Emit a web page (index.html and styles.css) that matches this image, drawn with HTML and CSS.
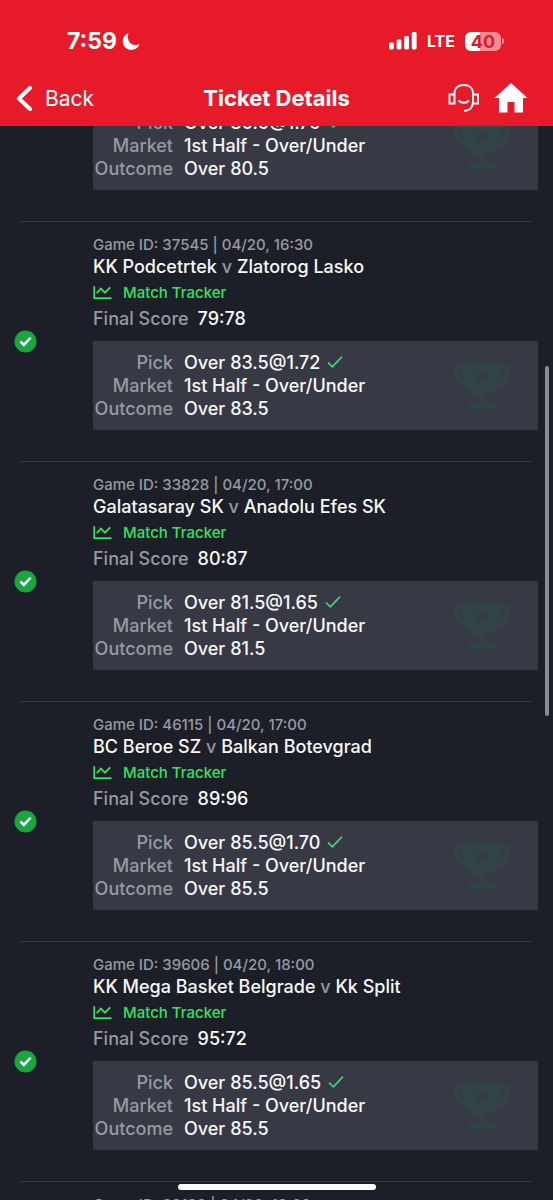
FILE: index.html
```
<!DOCTYPE html>
<html lang="en">
<head>
<meta charset="utf-8">
<meta name="viewport" content="width=device-width, initial-scale=1">
<title>Ticket Details</title>
<link rel="stylesheet" href="styles.css">
</head>
<body>
<svg class="defs" width="0" height="0" aria-hidden="true">
  <symbol id="won" viewBox="0 0 24 24"><circle cx="12" cy="12" r="11.5" fill="#18a641"/><path d="M6.800 12l3.500 3.500 7-7.400" fill="none" stroke="#fff" stroke-width="2.600"/></symbol>
  <symbol id="chart" viewBox="0 0 18 14"><path d="M1.200 1v11.400H17.500M3.500 7.500l4-4.200 3.800 3.900 5-5" fill="none" stroke="currentColor" stroke-width="1.700"/></symbol>
  <symbol id="tick" viewBox="0 0 16 16"><path d="M1 7.600l4.400 4.200L15 1.600" fill="none" stroke="currentColor" stroke-width="1.600"/></symbol>
  <symbol id="trophy" viewBox="0 0 56 50"><path fill="currentColor" fill-rule="evenodd" d="M11 1h34v3h11v6c0 9-4 14-12 17-3 4-7 7-13 8v6h5c3 0 5 2 5 4v3H14v-3c0-2 2-4 5-4h6v-6c-6-1-10-4-13-8C4 24 0 19 0 10V4h11zM5 9v2c0 4 2 7 5 9-1-3-2-7-2-11zM51 9h-3c0 4-1 8-2 11 3-2 5-5 5-9zM28 8l-2.300 5.400-5.700.5 4.400 3.800-1.400 5.600 5-3 5 3-1.400-5.600 4.400-3.800-5.700-.5z"/></symbol>
</svg>

<header class="top">
  <div class="status">
    <div class="clock">7:59
      <svg width="18" height="19" viewBox="0 0 18 19" aria-hidden="true"><path d="M6.500 1C2.800 2.500.800 5.700.800 9.200c0 5 3.900 8.600 8.700 8.600 3.700 0 6.900-2.200 8-5.500-1.200.5-2.400.7-3.700.7C9 13 6.200 9.800 5.900 5.400c0-1.600.1-3 .6-4.400z" fill="#fff"/></svg>
    </div>
    <div class="signals">
      <svg width="28" height="18" viewBox="0 0 28 18" aria-hidden="true" fill="#fff"><rect x="0" y="10.500" width="4.800" height="7" rx="1.400"/><rect x="7.600" y="7.500" width="4.800" height="10" rx="1.400"/><rect x="15.200" y="4" width="4.800" height="13.500" rx="1.400"/><rect x="22.800" y="0" width="4.800" height="17.500" rx="1.400"/></svg>
      <span class="network">LTE</span>
      <span class="battery"><span class="cell">40</span></span>
    </div>
  </div>
  <nav class="bar">
    <a class="back" href="#"><svg width="17" height="26" viewBox="0 0 17 26" aria-hidden="true"><path d="M14 3L3 13.500l11 10.500" fill="none" stroke="#fff" stroke-width="4" stroke-linecap="round" stroke-linejoin="round"/></svg>Back</a>
    <h1 class="title">Ticket Details</h1>
    <div class="actions">
      <a href="#" aria-label="Support"><svg width="32" height="30" viewBox="0 0 32 30" aria-hidden="true" fill="none" stroke="#fff" stroke-width="1.900"><path d="M6.500 11.500h-5v9h5zM30 11.500h-5v9h5zM6.500 11.500v-1.500C6.500 5 10.500 2 15.800 2S25 5 25 10v8.500c0 6-3 9-9 9.500"/><path d="M10.500 17.500c3 3 7.500 3 10.500 0"/></svg></a>
      <a href="#" aria-label="Home"><svg width="34" height="30" viewBox="0 0 34 30" aria-hidden="true"><path d="M17 0l16.500 15H29v14.500h-8.500V19h-7v10.500H5V15H.5z" fill="#fff"/></svg></a>
    </div>
  </nav>
</header>

<main>
  <ul class="games">
    <li class="game first">
      <div class="info">
        <dl class="panel"><dt>Pick</dt><dd>Over 80.5@1.75 <svg class="tick" aria-hidden="true"><use href="#tick"/></svg></dd><dt>Market</dt><dd>1st Half - Over/Under</dd><dt>Outcome</dt><dd>Over 80.5</dd><svg class="trophy" aria-hidden="true"><use href="#trophy"/></svg></dl>
      </div>
    </li>
    <li class="game">
      <svg class="won" role="img" aria-label="Won"><use href="#won"/></svg>
      <div class="info">
        <p class="meta">Game ID: 37545 | 04/20, 16:30</p>
        <h2 class="teams">KK Podcetrtek <span>v</span> Zlatorog Lasko</h2>
        <a class="tracker" href="#"><svg class="chart" aria-hidden="true"><use href="#chart"/></svg>Match Tracker</a>
        <p class="score">Final Score <b>79:78</b></p>
        <dl class="panel"><dt>Pick</dt><dd>Over 83.5@1.72 <svg class="tick" aria-hidden="true"><use href="#tick"/></svg></dd><dt>Market</dt><dd>1st Half - Over/Under</dd><dt>Outcome</dt><dd>Over 83.5</dd><svg class="trophy" aria-hidden="true"><use href="#trophy"/></svg></dl>
      </div>
    </li>
    <li class="game">
      <svg class="won" role="img" aria-label="Won"><use href="#won"/></svg>
      <div class="info">
        <p class="meta">Game ID: 33828 | 04/20, 17:00</p>
        <h2 class="teams">Galatasaray SK <span>v</span> Anadolu Efes SK</h2>
        <a class="tracker" href="#"><svg class="chart" aria-hidden="true"><use href="#chart"/></svg>Match Tracker</a>
        <p class="score">Final Score <b>80:87</b></p>
        <dl class="panel"><dt>Pick</dt><dd>Over 81.5@1.65 <svg class="tick" aria-hidden="true"><use href="#tick"/></svg></dd><dt>Market</dt><dd>1st Half - Over/Under</dd><dt>Outcome</dt><dd>Over 81.5</dd><svg class="trophy" aria-hidden="true"><use href="#trophy"/></svg></dl>
      </div>
    </li>
    <li class="game">
      <svg class="won" role="img" aria-label="Won"><use href="#won"/></svg>
      <div class="info">
        <p class="meta">Game ID: 46115 | 04/20, 17:00</p>
        <h2 class="teams">BC Beroe SZ <span>v</span> Balkan Botevgrad</h2>
        <a class="tracker" href="#"><svg class="chart" aria-hidden="true"><use href="#chart"/></svg>Match Tracker</a>
        <p class="score">Final Score <b>89:96</b></p>
        <dl class="panel"><dt>Pick</dt><dd>Over 85.5@1.70 <svg class="tick" aria-hidden="true"><use href="#tick"/></svg></dd><dt>Market</dt><dd>1st Half - Over/Under</dd><dt>Outcome</dt><dd>Over 85.5</dd><svg class="trophy" aria-hidden="true"><use href="#trophy"/></svg></dl>
      </div>
    </li>
    <li class="game">
      <svg class="won" role="img" aria-label="Won"><use href="#won"/></svg>
      <div class="info">
        <p class="meta">Game ID: 39606 | 04/20, 18:00</p>
        <h2 class="teams">KK Mega Basket Belgrade <span>v</span> Kk Split</h2>
        <a class="tracker" href="#"><svg class="chart" aria-hidden="true"><use href="#chart"/></svg>Match Tracker</a>
        <p class="score">Final Score <b>95:72</b></p>
        <dl class="panel"><dt>Pick</dt><dd>Over 85.5@1.65 <svg class="tick" aria-hidden="true"><use href="#tick"/></svg></dd><dt>Market</dt><dd>1st Half - Over/Under</dd><dt>Outcome</dt><dd>Over 85.5</dd><svg class="trophy" aria-hidden="true"><use href="#trophy"/></svg></dl>
      </div>
    </li>
    <li class="game">
      <div class="info">
        <p class="meta">Game ID: 39198 | 04/20, 18:00</p>
      </div>
    </li>
  </ul>
</main>
<div class="thumb"></div>
<div class="home-indicator"></div>
</body>
</html>
```
FILE: styles.css
```
* { box-sizing: border-box; }

body {
  margin: 0;
  height: 100vh;
  overflow: hidden;
  display: flex;
  flex-direction: column;
  background: #1c1f27;
  color: #f7f8fa;
  font: 500 18px/23px Inter, "Liberation Sans", sans-serif;
}

h1, h2, p, ul, dl, dd { margin: 0; padding: 0; }
a { color: inherit; text-decoration: none; }
svg { flex: none; }
.defs { position: absolute; }

.top {
  flex: none;
  position: relative;
  z-index: 1;
  padding-top: 26px;
  background: #e61a28;
  color: #fff;
}

.status {
  display: flex;
  justify-content: space-between;
  align-items: center;
  height: 30px;
  padding: 0 49px 0 67px;
}
.clock { display: flex; align-items: center; gap: 5px; font-size: 23px; font-weight: 700; }
.signals { display: flex; align-items: center; gap: 10px; }
.network { font-size: 16px; font-weight: 700; }
.battery { display: flex; align-items: center; gap: 1px; }
.battery::after { content: ""; width: 2px; height: 6px; border-radius: 0 2px 2px 0; background: #f28c94; }
.cell {
  width: 36px;
  border-radius: 6px;
  background: linear-gradient(90deg, #fff 41%, #f28c94 41%);
  color: #d91a28;
  font-size: 18px;
  font-weight: 700;
  line-height: 19px;
  text-align: center;
}

.bar {
  display: grid;
  grid-template-columns: 1fr auto 1fr;
  align-items: center;
  height: 70px;
  padding: 14px 16px 0;
}
.back { display: flex; align-items: center; gap: 12px; font-size: 21px; font-weight: 400; }
.title { font-size: 22px; font-weight: 700; }
.actions { display: flex; justify-content: flex-end; gap: 14px; padding-right: 9px; }
.actions a, .actions svg { display: block; }

main { flex: 1; min-height: 0; }
.games { list-style: none; margin-top: -25px; padding: 0 15px 0 14px; }
.game { display: grid; grid-template-columns: 79px 1fr; align-items: center; }
.game::before { content: ""; grid-column: 1 / -1; height: 1px; margin: 0 5px 0 6px; background: #363a43; }
.first::before { display: none; }
.info { grid-column: 2; min-width: 0; padding: 12px 0 31px; }
.first .info { padding-top: 0; }
.won { width: 23px; height: 23px; }

.meta { color: #969aa3; font-size: 15px; line-height: 22px; }
.teams { font-size: 18px; font-weight: 500; line-height: 22px; }
.teams span { color: #969aa3; }
.tracker { display: flex; align-items: center; gap: 11px; color: #35e065; font-size: 15px; line-height: 29px; }
.chart { width: 19px; height: 15px; }
.score { display: flex; gap: 9px; color: #969aa3; line-height: 24px; }
.score b { color: #f7f8fa; font-weight: 500; }

.panel {
  position: relative;
  display: grid;
  grid-template-columns: 80px 1fr;
  column-gap: 11px;
  margin-top: 10px;
  padding: 10px 0;
  background: #373a45;
}
.first .panel { margin-top: 0; }
.panel dt { color: #969aa3; text-align: right; }
.panel dd { display: flex; align-items: center; gap: 7px; }
.tick { width: 16px; height: 16px; color: #3fd878; }
.trophy { position: absolute; top: 20px; right: 28px; width: 56px; height: 50px; color: #304447; }

.thumb {
  position: fixed;
  top: 366px;
  right: 4px;
  width: 4px;
  height: 350px;
  border-radius: 2px;
  background: #898b90;
}
.home-indicator {
  position: fixed;
  bottom: 10px;
  left: 50%;
  width: 198px;
  height: 6px;
  margin-left: -99px;
  border-radius: 3px;
  background: #fff;
}
```
